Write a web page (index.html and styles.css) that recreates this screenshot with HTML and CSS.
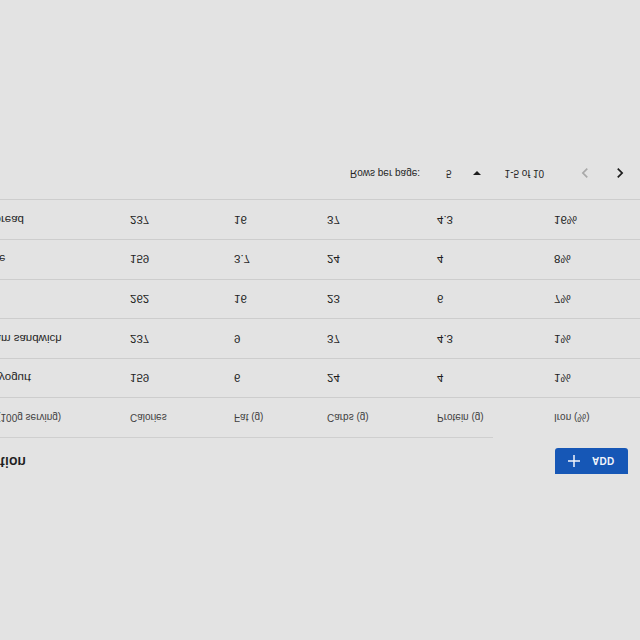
FILE: index.html
```html
<!DOCTYPE html>
<html lang="en">
<head>
<meta charset="utf-8">
<title>Nutrition</title>
<link rel="stylesheet" href="styles.css">
</head>
<body>
<div class="page">
  <div class="content">
    <div class="toolbar">
      <h2 class="title">Nutrition</h2>
      <button class="add-btn" type="button">
        <svg class="plus" viewBox="0 0 14 14" width="14" height="14"><path d="M7 1v12M1 7h12" stroke="currentColor" stroke-width="1.5" fill="none"/></svg>
        <span>ADD</span>
      </button>
    </div>
    <div class="separator"></div>
    <div class="row head">
      <div>Dessert (100g serving)</div>
      <div>Calories</div>
      <div>Fat (g)</div>
      <div>Carbs (g)</div>
      <div>Protein (g)</div>
      <div>Iron (%)</div>
    </div>
    <div class="row">
      <div>Frozen yogurt</div><div>159</div><div>6</div><div>24</div><div>4</div><div>1%</div>
    </div>
    <div class="row">
      <div>Ice cream sandwich</div><div>237</div><div>9</div><div>37</div><div>4.3</div><div>1%</div>
    </div>
    <div class="row">
      <div>Eclair</div><div>262</div><div>16</div><div>23</div><div>6</div><div>7%</div>
    </div>
    <div class="row">
      <div>Cupcake</div><div>159</div><div>3.7</div><div>24</div><div>4</div><div>8%</div>
    </div>
    <div class="row">
      <div>Gingerbread</div><div>237</div><div>16</div><div>37</div><div>4.3</div><div>16%</div>
    </div>
    <div class="pagination">
      <span class="rows-label">Rows per page:</span>
      <span class="rows-value">5</span>
      <svg class="dropdown" viewBox="7 10 10 5" width="8" height="4"><path d="M7 10l5 5 5-5z" fill="currentColor"/></svg>
      <span class="range">1-5 of 10</span>
      <svg class="chev disabled" viewBox="0 0 24 24" width="20" height="20"><path d="M15.41 7.41 14 6l-6 6 6 6 1.41-1.41L10.83 12z" fill="currentColor"/></svg>
      <svg class="chev" viewBox="0 0 24 24" width="20" height="20"><path d="M10 6 8.59 7.41 13.17 12l-4.58 4.59L10 18l6-6z" fill="currentColor"/></svg>
    </div>
  </div>
</div>
</body>
</html>
```
FILE: styles.css
```css
html, body {
  margin: 0;
  padding: 0;
  background: #e3e3e3;
}
body {
  font-family: "Liberation Sans", Arial, sans-serif;
  overflow: hidden;
}
.page {
  width: 640px;
  height: 640px;
  overflow: hidden;
  transform: scaleY(-1);
  padding-top: 166px;
  box-sizing: border-box;
}
.content {
  margin-left: -40px;
  width: 680px;
}
.toolbar {
  display: flex;
  align-items: center;
  justify-content: space-between;
  height: 26px;
  padding-left: 7px;
  padding-right: 12px;
  margin-bottom: 10px;
}
.title {
  margin: 0 0 2px 0;
  font-family: Roboto, "Liberation Sans", sans-serif;
  font-size: 15px;
  font-weight: 500;
  line-height: 18px;
  color: #1e1e1e;
}
.add-btn {
  display: flex;
  align-items: center;
  gap: 11px;
  width: 73px;
  height: 26px;
  padding: 0 0 0 12px;
  border: none;
  border-radius: 0 0 3px 3px;
  background: #1657b6;
  color: #f2f5fb;
  font-family: "Liberation Sans", Arial, sans-serif;
  font-size: 10px;
  font-weight: 700;
  letter-spacing: 0.3px;
  box-sizing: border-box;
}
.plus {
  display: block;
}
.separator {
  width: 533px;
  border-top: 1px solid #cfcfcf;
}
.row {
  display: grid;
  grid-template-columns: 170px 104px 93px 110px 117px 1fr;
  align-items: center;
  height: 39.6px;
  box-sizing: border-box;
  border-bottom: 1px solid #cdcdcd;
  font-size: 11.5px;
  color: #1f1f1f;
}
.row.head {
  font-size: 10px;
  color: #3f3f3f;
}
.pagination {
  display: flex;
  align-items: center;
  height: 52px;
  padding-left: 390px;
  font-size: 10px;
  color: #262626;
}
.rows-value {
  margin-left: 26px;
}
.dropdown {
  margin-left: 21px;
  color: #1e1e1e;
}
.range {
  margin-left: 24px;
}
.chev {
  color: #1e1e1e;
}
.chev.disabled {
  margin-left: 31px;
  color: #a9a9a9;
}
.chev.disabled + .chev {
  margin-left: 15px;
}
```
